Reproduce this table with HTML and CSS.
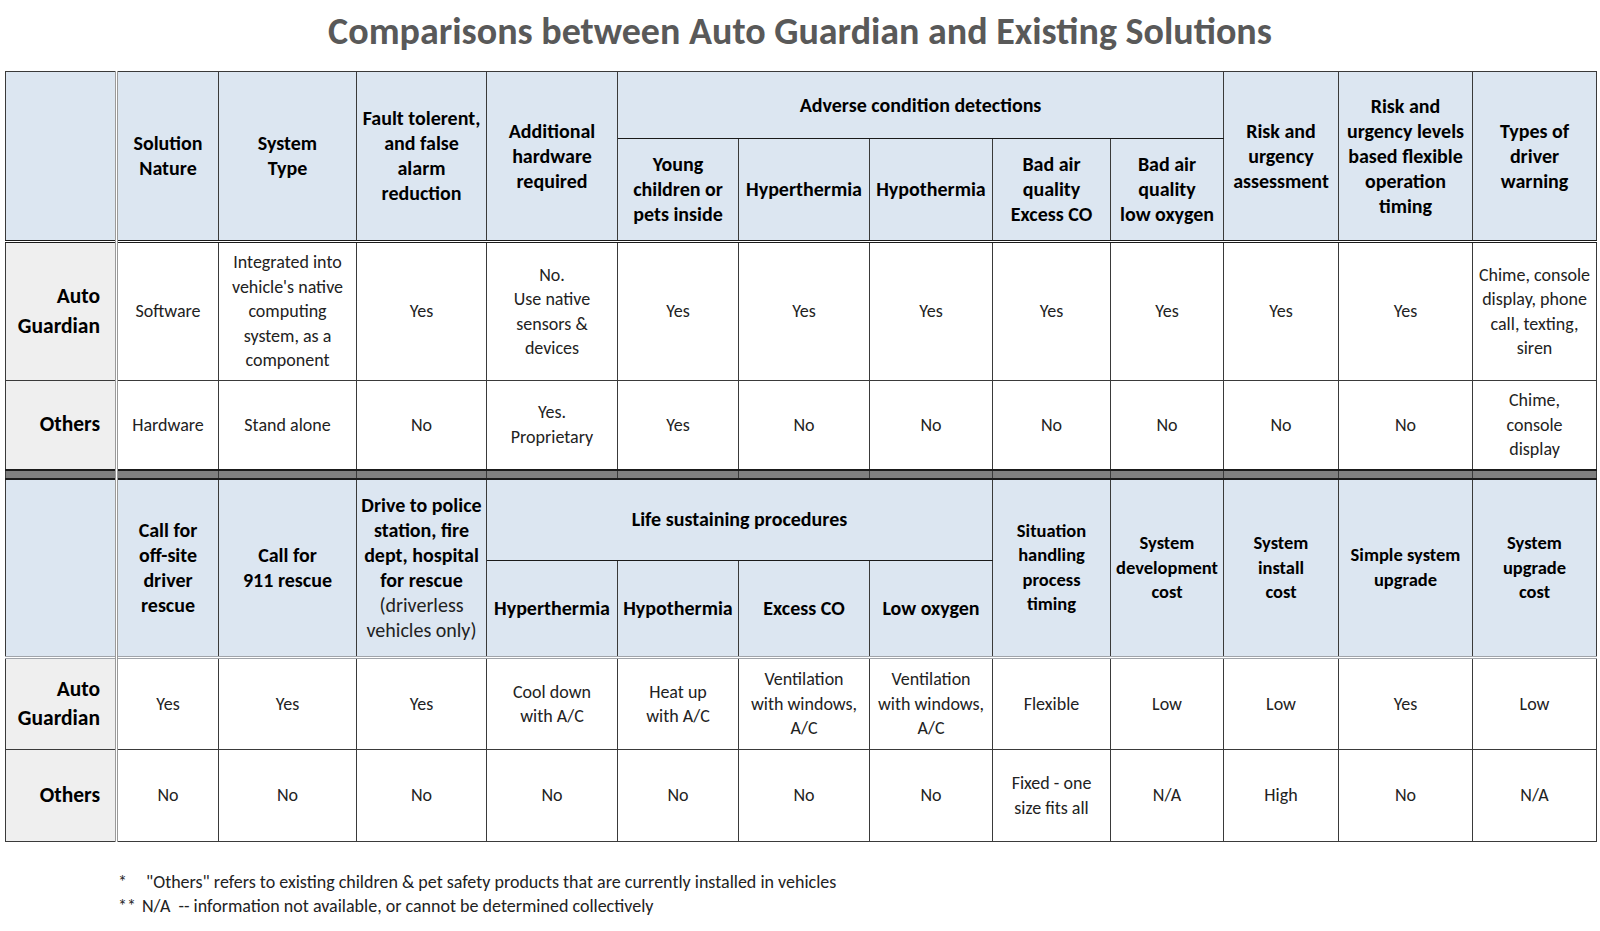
FILE: index.html
```html
<!DOCTYPE html>
<html>
<head>
<meta charset="utf-8">
<title>Comparisons between Auto Guardian and Existing Solutions</title>
<link rel="stylesheet" href="styles.css">
</head>
<body>
<div class="page">
  <h1 class="title">Comparisons between Auto Guardian and Existing Solutions</h1>
  <table class="cmp">
    <colgroup>
      <col class="c0"><col class="c1"><col class="c2"><col class="c3"><col class="c4"><col class="c5"><col class="c6"><col class="c7"><col class="c8"><col class="c9"><col class="c10"><col class="c11"><col class="c12">
    </colgroup>
    <tbody>
      <tr class="h1a">
        <th class="lab corner" rowspan="2"></th>
        <th rowspan="2">Solution<br>Nature</th>
        <th rowspan="2">System<br>Type</th>
        <th rowspan="2">Fault tolerent,<br>and false<br>alarm<br>reduction</th>
        <th rowspan="2">Additional<br>hardware<br>required</th>
        <th colspan="5" class="grp">Adverse condition detections</th>
        <th rowspan="2">Risk and<br>urgency<br>assessment</th>
        <th rowspan="2">Risk and<br>urgency levels<br>based flexible<br>operation<br>timing</th>
        <th rowspan="2">Types of<br>driver<br>warning</th>
      </tr>
      <tr class="h1b">
        <th>Young<br>children or<br>pets inside</th>
        <th>Hyperthermia</th>
        <th>Hypothermia</th>
        <th>Bad air<br>quality<br>Excess CO</th>
        <th>Bad air<br>quality<br>low oxygen</th>
      </tr>
      <tr class="r1a hb">
        <th class="lab">Auto<br>Guardian</th>
        <td>Software</td>
        <td>Integrated into<br>vehicle's native<br>computing<br>system, as a<br>component</td>
        <td>Yes</td>
        <td>No.<br>Use native<br>sensors &amp;<br>devices</td>
        <td>Yes</td><td>Yes</td><td>Yes</td><td>Yes</td><td>Yes</td><td>Yes</td><td>Yes</td>
        <td>Chime, console<br>display, phone<br>call, texting,<br>siren</td>
      </tr>
      <tr class="r1b">
        <th class="lab">Others</th>
        <td>Hardware</td>
        <td>Stand alone</td>
        <td>No</td>
        <td>Yes.<br>Proprietary</td>
        <td>Yes</td><td>No</td><td>No</td><td>No</td><td>No</td><td>No</td><td>No</td>
        <td>Chime,<br>console<br>display</td>
      </tr>
      <tr class="sep">
        <td class="lab"></td><td></td><td></td><td></td><td></td><td></td><td></td><td></td><td></td><td></td><td></td><td></td><td></td>
      </tr>
      <tr class="h2a">
        <th class="lab corner" rowspan="2"></th>
        <th rowspan="2">Call for<br>off-site<br>driver<br>rescue</th>
        <th rowspan="2">Call for<br>911 rescue</th>
        <th rowspan="2">Drive to police<br>station, fire<br>dept, hospital<br>for rescue<br><span class="nb">(driverless<br>vehicles only)</span></th>
        <th colspan="4" class="grp">Life sustaining procedures</th>
        <th rowspan="2" class="sm">Situation<br>handling<br>process<br>timing</th>
        <th rowspan="2" class="sm">System<br>development<br>cost</th>
        <th rowspan="2" class="sm">System<br>install<br>cost</th>
        <th rowspan="2" class="sm">Simple system<br>upgrade</th>
        <th rowspan="2" class="sm">System<br>upgrade<br>cost</th>
      </tr>
      <tr class="h2b">
        <th>Hyperthermia</th>
        <th>Hypothermia</th>
        <th>Excess CO</th>
        <th>Low oxygen</th>
      </tr>
      <tr class="r2a hb2">
        <th class="lab">Auto<br>Guardian</th>
        <td>Yes</td><td>Yes</td><td>Yes</td>
        <td>Cool down<br>with A/C</td>
        <td>Heat up<br>with A/C</td>
        <td>Ventilation<br>with windows,<br>A/C</td>
        <td>Ventilation<br>with windows,<br>A/C</td>
        <td>Flexible</td>
        <td>Low</td>
        <td>Low</td>
        <td>Yes</td>
        <td>Low</td>
      </tr>
      <tr class="r2b">
        <th class="lab">Others</th>
        <td>No</td><td>No</td><td>No</td><td>No</td><td>No</td><td>No</td><td>No</td>
        <td>Fixed - one<br>size fits all</td>
        <td>N/A</td>
        <td>High</td>
        <td>No</td>
        <td>N/A</td>
      </tr>
    </tbody>
  </table>
  <div class="notes">
    <div class="note"><span class="mark">*</span><span class="txt">"Others" refers to existing children &amp; pet safety products that are currently installed in vehicles</span></div>
    <div class="note"><span class="mark mark2">**</span><span class="txt2">N/A&nbsp; -- information not available, or cannot be determined collectively</span></div>
  </div>
</div>
</body>
</html>
```
FILE: styles.css
```css
html, body {
  margin: 0;
  padding: 0;
  background: #ffffff;
}
body {
  font-family: "Carlito", "Lato", "Liberation Sans", sans-serif;
  color: #1e1e1e;
}
.page {
  width: 1600px;
}
.title {
  margin: 0;
  height: 71px;
  box-sizing: border-box;
  padding-top: 8px;
  text-align: center;
  font-size: 38px;
  line-height: 46px;
  font-weight: 700;
  color: #595959;
}
.cmp {
  margin-left: 5px;
  width: 1591px;
  table-layout: fixed;
  border-collapse: collapse;
  border: 1px solid #333;
}
.c0 { width: 111px; }
.c1 { width: 102px; }
.c2 { width: 138px; }
.c3 { width: 130px; }
.c4 { width: 131px; }
.c5 { width: 121px; }
.c6 { width: 131px; }
.c7 { width: 123px; }
.c8 { width: 118px; }
.c9 { width: 113px; }
.c10 { width: 115px; }
.c11 { width: 134px; }
.c12 { width: 124px; }

.cmp th, .cmp td {
  border: 1px solid #3a3a3a;
  text-align: center;
  vertical-align: middle;
  padding: 0 2px;
  overflow: hidden;
  white-space: nowrap;
}
.cmp th {
  background: #dce6f1;
  font-weight: 700;
  font-size: 20px;
  line-height: 25px;
  color: #000;
}
.cmp td {
  background: #fff;
  font-size: 18px;
  line-height: 24.5px;
  color: #222;
}
.cmp th.sm {
  font-size: 18.5px;
  line-height: 24.5px;
}
.cmp .nb {
  font-weight: 400;
  color: #222;
}
.cmp th.lab, .cmp td.lab {
  background: #efefef;
  border-right: 3px double #9a9a9a;
  text-align: right;
  padding-right: 15px;
  font-size: 21.5px;
  line-height: 29.5px;
  color: #000;
}
.cmp th.corner {
  background: #dce6f1;
}
.h1a { height: 67px; }
.h1b { height: 103px; }
.r1a { height: 139px; }
.r1b { height: 89px; }
.h2a { height: 82px; }
.h2b { height: 97px; }
.r2a { height: 92px; }
.r2b { height: 92px; }

.hb th, .hb td {
  border-top: 3px double #1a1a1a;
}
.hb2 th, .hb2 td {
  border-top: 3px double #a0a4aa;
}
.r1b th, .r1b td {
  border-top: 1px solid #9a9a9a;
}
.r2b th, .r2b td {
  border-top: 1px solid #9a9a9a;
}
.sep { height: 9px; }
.sep td, .sep td.lab {
  background: #7f7f7f;
  border-top: 2px solid #1a1a1a;
  border-bottom: 2px solid #1a1a1a;
  padding: 0;
  line-height: 1px;
  font-size: 1px;
}
.cmp .grp {
  border-bottom: 1px solid #1a1a1a;
}

.notes {
  margin-top: 28px;
  padding-left: 118px;
  font-size: 18px;
  line-height: 24px;
  color: #222;
}
.note {
  display: flex;
}
.mark {
  display: inline-block;
  width: 28px;
}
.mark2 {
  width: 24px;
}
```
